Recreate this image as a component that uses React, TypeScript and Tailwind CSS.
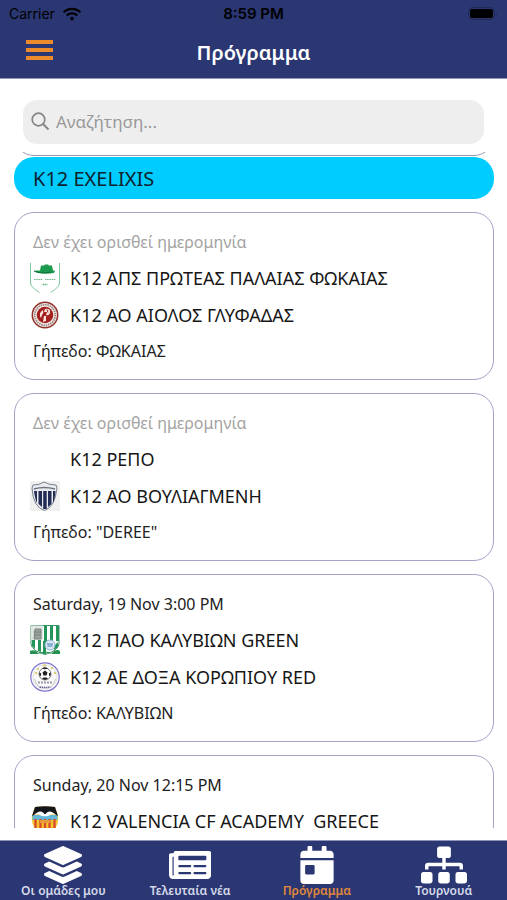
import type { ReactNode } from "react";
import {
  FaCalendarDay,
  FaLayerGroup,
  FaNewspaper,
  FaSitemap,
  FaWifi,
} from "react-icons/fa";

type Team = {
  name: string
  crest?: ReactNode
}

type Match = {
  date?: string
  home: Team
  away?: Team
  field?: string
}

const ProteasCrest = () => (
  <svg viewBox="0 0 30 30" className="w-full h-full" fill="none">
    <path d="M.5 0v20q0 4 9 9.500M29.500 0v20q0 4-9 9.500" stroke="#7fc79d" />
    <path d="M10 7.500l1-5h3l1-1h3l1 1h3l1 5h2l-1 2.500q-8 1.500-16 0L4 8.500l2-1z" fill="#1c9a50" />
    <path d="M4 8q6 3 17 1" stroke="#12733a" />
    <path d="M4 16.500h9M15 16.500h11" stroke="#6cb88b" strokeDasharray="1.500 .7" />
    <path d="M12.500 21.500h5" stroke="#6cb88b" strokeWidth="1.500" strokeDasharray="1.500 .5" />
  </svg>
)

const AiolosCrest = () => (
  <svg viewBox="0 0 30 30" className="w-full h-full" fill="none">
    <circle cx="15" cy="15" r="12.700" fill="#f3e9e4" stroke="#93322d" strokeWidth="1.500" />
    <circle cx="15" cy="15" r="10.300" stroke="#9a8a84" strokeWidth="1.800" strokeDasharray="1.500 .8" />
    <circle cx="15" cy="15" r="8.300" fill="#a3201f" />
    <path d="M11 18q-3-5 2-8 1 3-1 5zM15 9q6-1 5 4-1 3-4 2l1-3h-3zM14 16h2v5l-3 1z" fill="#f6e5df" />
    <path d="M17 9.500l1 3" stroke="#a3201f" />
  </svg>
)

const VouliagmeniCrest = () => (
  <svg viewBox="0 0 30 30" className="w-full h-full" fill="none">
    <path d="M0 0h30v30H0z" fill="#f0f0ef" />
    <path d="M3 4q7 0 11-3 5 3 12 3l1 3q-2 19-12.500 22.500Q3 26 2 7z" fill="#e9ebf0" stroke="#77808c" />
    <path d="M4 8q10-3 21 0" stroke="#6d7480" strokeWidth="1.500" />
    <path d="M4 10h3v12q-2-4-3-12zM8.500 10h3.500v16l-3.500-3zM13.200 10h3.500v18h-3.500zM18 10h3.500v13L18 26zM23 10h2.500q-.5 8-2.500 12z" fill="#222c55" />
  </svg>
)

const KalyviaCrest = () => (
  <svg viewBox="0 0 30 30" className="w-full h-full" fill="none">
    <path d="M1 .5h28V19q-1 7-14 10.500Q2 26 1 19z" fill="#fff" stroke="#3c9265" />
    <path d="M14 1h3v15h-3zM20 1h3v15h-3zM26 1h3v15h-3zM2 15h3v9l-3-3zM8 15h3v12l-3-1zM13 16h3v13h-3zM24 21l4-4v5l-4 3z" fill="#239558" />
    <path d="M1 .5h12V15H1z" fill="#e3e7e4" />
    <path d="M5 4h6v10H4zM3.500 7h8M4 10h7" fill="#9aa29d" stroke="#7b847f" />
    <circle cx="20" cy="20" r="5" fill="#dce9f5" stroke="#8fb1d3" />
    <path d="M17 19h6M17.500 21h5" stroke="#3d79b4" strokeWidth="1.200" />
    <path d="M0 26q4-2 7 1l2 2H0zM21 29l3-3q4-2 6 0v3z" fill="#279154" />
    <path d="M9 28q6-2 12 0" stroke="#239558" />
  </svg>
)

const DoxaCrest = () => (
  <svg viewBox="0 0 30 30" className="w-full h-full" fill="none">
    <circle cx="15" cy="15" r="14.200" fill="#fafafa" stroke="#7d75cf" strokeWidth="1.200" />
    <circle cx="15" cy="15" r="12" stroke="#dcdcd4" strokeWidth=".8" />
    <path d="M5 11h2M7 7h2M13 3.500h3M21 6h2M24 11h2" stroke="#d8cf72" strokeWidth="1.800" />
    <circle cx="15" cy="12" r="6" fill="#fff" stroke="#777" />
    <path d="M12.500 10.500l2.500-2 2.500 2-.9 3h-3.200zM12 6.500l3 .7 3-.7-1.500-1h-3zM9.300 10.500l1.900 1-.5 3-1.400-1.500zM20.700 10.500l-1.900 1 .5 3 1.400-1.500zM12 16.500l1.500-1h3l1.500 1-3 1.500z" fill="#202024" />
    <path d="M8 20.500h14" stroke="#9a9aa8" strokeWidth="2" strokeDasharray="2 1" />
    <path d="M9.500 25q6 1 11 0" stroke="#64648a" strokeWidth="1.500" strokeDasharray="1.500 .6" />
    <path d="M4.500 17q1 5 5 8M25.500 17q-1 5-5 8" stroke="#c3c3cf" />
  </svg>
)

const ValenciaCrest = () => (
  <svg viewBox="0 0 30 30" className="w-full h-full" fill="none">
    <path d="M5 1q10-1.500 20 0l3 9q2 13-13 19Q0 23 2 10z" fill="#f4c52d" />
    <path d="M2.500 9h25v5h-25z" fill="#62b6d6" />
    <path d="M5.500 13v11M10.500 13v14M15 13v16M19.500 13v14M24.500 13v11" stroke="#d9472c" strokeWidth="2.300" />
    <path d="M10 14h10v3H10z" fill="#e79a37" />
    <path d="M5 1q10-1.500 20 0l3 9q-5-3-7-4-3 0-6 3-3-3-6-3-2 1-7 4z" fill="#14151a" />
    <path d="M4 9q4-4 7-3.500 2 .5 4 3 2-2.500 4-3Q22 5 26 9q-3-1-5-.5-3 2.500-6 1.500-3 1-6-1.500Q7 8 4 9z" fill="#fff" />
  </svg>
)

const matches: Match[] = [
  {
    home: { name: "Κ12 ΑΠΣ ΠΡΩΤΕΑΣ ΠΑΛΑΙΑΣ ΦΩΚΑΙΑΣ", crest: <ProteasCrest /> },
    away: { name: "Κ12 ΑΟ ΑΙΟΛΟΣ ΓΛΥΦΑΔΑΣ", crest: <AiolosCrest /> },
    field: "ΦΩΚΑΙΑΣ",
  },
  {
    home: { name: "Κ12 ΡΕΠΟ" },
    away: { name: "Κ12 ΑΟ ΒΟΥΛΙΑΓΜΕΝΗ", crest: <VouliagmeniCrest /> },
    field: "\"DEREE\"",
  },
  {
    date: "Saturday, 19 Nov 3:00 PM",
    home: { name: "Κ12 ΠΑΟ ΚΑΛΥΒΙΩΝ GREEN", crest: <KalyviaCrest /> },
    away: { name: "Κ12 ΑΕ ΔΟΞΑ ΚΟΡΩΠΙΟΥ RED", crest: <DoxaCrest /> },
    field: "ΚΑΛΥΒΙΩΝ",
  },
  {
    date: "Sunday, 20 Nov 12:15 PM",
    home: { name: "K12 VALENCIA CF ACADEMY  GREECE", crest: <ValenciaCrest /> },
  },
]

const tabs = [
  { label: "Οι ομάδες μου", icon: <FaLayerGroup className="w-[38px] h-[38px]" /> },
  { label: "Τελευταία νέα", icon: <FaNewspaper className="w-[42px] h-[38px]" /> },
  { label: "Πρόγραμμα", icon: <FaCalendarDay className="w-[38px] h-[38px]" />, active: true },
  { label: "Τουρνουά", icon: <FaSitemap className="w-[46px] h-[38px]" /> },
]

const TeamRow = ({ team }: { team: Team }) => (
  <div className="flex items-center gap-2.5 h-9">
    <div className="w-[30px] h-[30px] shrink-0">{team.crest}</div>
    <p className="text-lg leading-6 text-[#161616] whitespace-pre">{team.name}</p>
  </div>
)

const MatchCard = ({ match }: { match: Match }) => (
  <li className="h-[168px] shrink-0 rounded-[20px] border border-[#a5a3c6] px-[15px] py-[11px]">
    <p className={`flex items-center h-9 pl-[3px] text-base ${match.date ? "text-[#222222]" : "text-[#a3a3a3]"}`}>
      {match.date ?? "Δεν έχει ορισθεί ημερομηνία"}
    </p>
    <div className="flex flex-col gap-px">
      <TeamRow team={match.home} />
      {match.away && <TeamRow team={match.away} />}
    </div>
    {match.field && (
      <p className="flex items-center h-9 pl-[3px] text-base text-[#222222]">Γήπεδο: {match.field}</p>
    )}
  </li>
)

const StatusBar = () => (
  <div className="grid grid-cols-3 items-center h-7 px-[9px] font-['Inter',sans-serif] text-sm text-black">
    <div className="flex items-center gap-2">
      <span>Carrier</span>
      <FaWifi className="w-[18px] h-4" />
    </div>
    <span className="text-center text-[15px] font-semibold">8:59 PM</span>
    <svg viewBox="0 0 30 14" className="w-[30px] h-3.5 justify-self-end" fill="none">
      <rect x=".5" y=".5" width="26" height="12" rx="4" stroke="#202955" />
      <rect x="2" y="2" width="23" height="9" rx="2" fill="#000" />
      <path d="M28 5v4q1.500-2 0-4z" fill="#202955" />
    </svg>
  </div>
)

export default function App() {
  return (
    <div className="flex flex-col h-screen bg-white font-['Noto_Sans',sans-serif]">
      <header className="shrink-0 bg-[#2b3772] border-b border-[#8f95b8]">
        <StatusBar />
        <div className="grid grid-cols-[60px_1fr_60px] items-center h-[50px]">
          <button aria-label="Menu" className="flex flex-col gap-1 ml-[26px] mb-1.5 w-[27px]">
            <span className="w-full h-1 bg-[#ec8a2c]" />
            <span className="w-full h-1 bg-[#ec8a2c]" />
            <span className="w-full h-1 bg-[#ec8a2c]" />
          </button>
          <h1 className="text-center text-xl font-semibold text-white">Πρόγραμμα</h1>
        </div>
      </header>

      <label className="flex items-center shrink-0 gap-[5px] h-11 mt-[21px] mx-[23px] px-2 rounded-[14px] bg-[#eeeeee]">
        <svg viewBox="0 0 20 20" className="w-5 h-5 shrink-0" fill="none" stroke="#858585" strokeWidth="1.700">
          <circle cx="7.500" cy="7.500" r="6.300" />
          <path d="M12 12l5.500 5.500" strokeWidth="2" />
        </svg>
        <input
          type="text"
          aria-label="Αναζήτηση"
          placeholder="Αναζήτηση..."
          className="w-full bg-transparent text-[17px] outline-none placeholder:text-[#999999]"
        />
      </label>

      <main className="flex flex-col flex-1 min-h-0 mt-2 mb-3 pl-3.5 pr-[13px] overflow-y-auto [scrollbar-width:none]">
        {/* tail of the card scrolled under the group title */}
        <div className="flex flex-col justify-end shrink-0 h-1 mb-px overflow-hidden">
          <div className="h-12 shrink-0 rounded-[20px] border border-[#9a9aae]" />
        </div>
        <h2 className="flex items-center shrink-0 h-[42px] pl-[19px] pt-0.5 rounded-[20px] bg-[#00ccff] text-xl text-[#10222c]">
          K12 EXELIXIS
        </h2>
        <ul className="flex flex-col gap-[13px] mt-[13px]">
          {matches.map((match) => (
            <MatchCard key={match.home.name} match={match} />
          ))}
        </ul>
      </main>

      <nav className="grid grid-cols-4 shrink-0 h-[60px] border-t border-[#8f95b8] bg-[#2b3772]">
        {tabs.map((tab) => (
          <a key={tab.label} href="#" className="flex flex-col items-center pt-1 text-white">
            <span className="flex items-center h-10">{tab.icon}</span>
            <span className={`text-xs leading-3 font-semibold ${tab.active ? "text-[#e0873a]" : "text-[#d5d9ea]"}`}>
              {tab.label}
            </span>
          </a>
        ))}
      </nav>
    </div>
  );
}
